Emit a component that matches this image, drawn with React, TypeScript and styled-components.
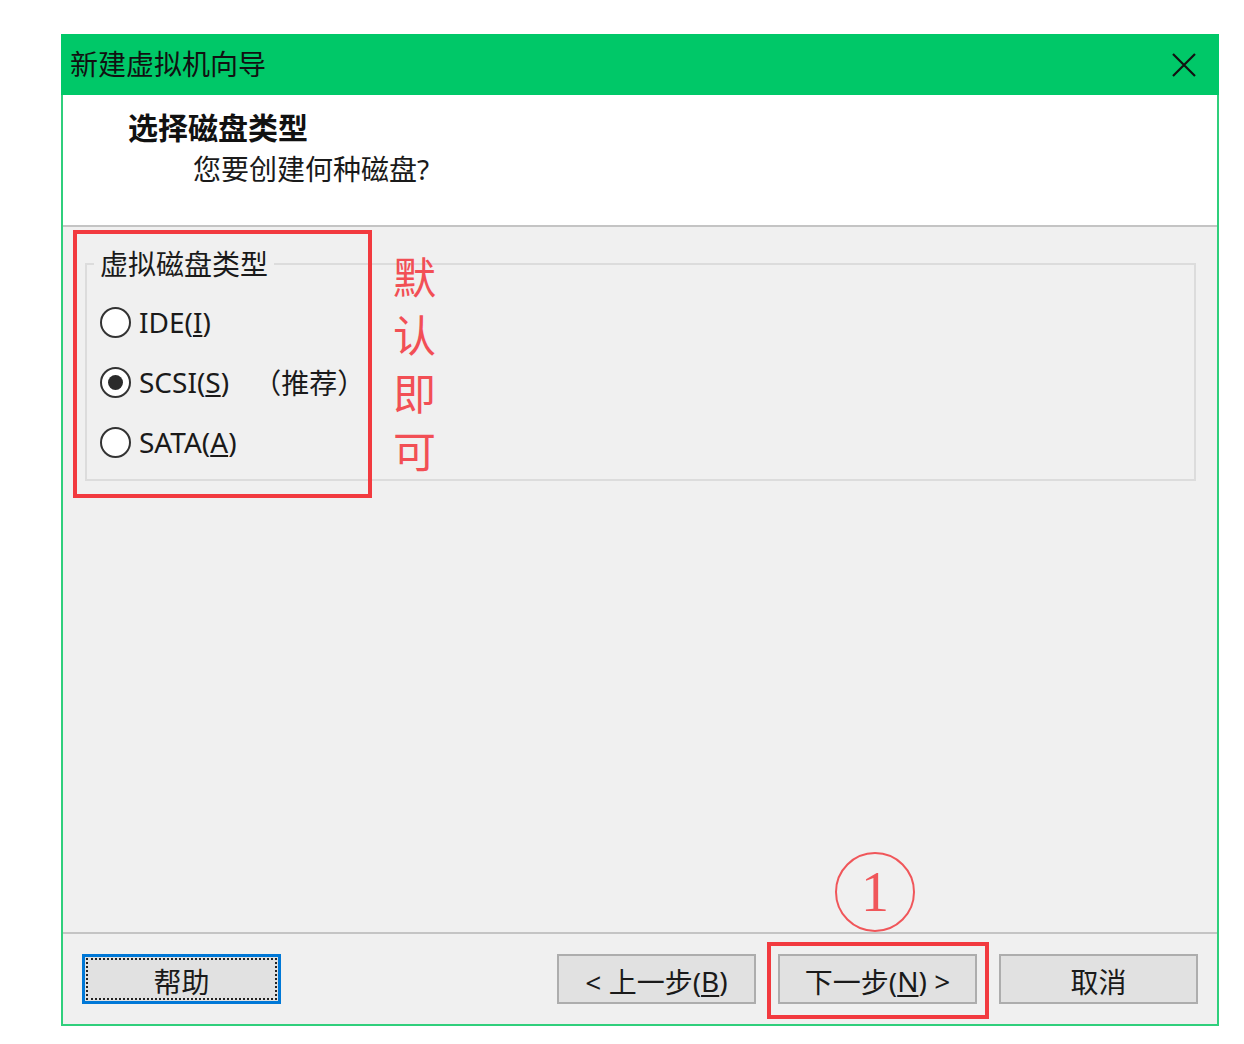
import styled, { createGlobalStyle } from 'styled-components';

const GlobalStyle = createGlobalStyle`
  body {
    margin: 0;
    background: #ffffff;
    font-family: "Noto Sans", "Noto Sans CJK SC", sans-serif;
  }
`;

const CJK = `"Noto Sans", "Noto Sans CJK SC", sans-serif`;

const Page = styled.div`
  padding: 34px 0 0 61px;
`;

const Window = styled.div`
  position: relative;
  width: 1158px;
  box-sizing: border-box;
  border: 2px solid #2fcf7c;
  border-top: none;
  display: flex;
  flex-direction: column;
  background: #f0f0f0;
`;

const TitleBar = styled.div`
  height: 61px;
  margin: 0 -2px;
  background: #00c868;
  display: flex;
  align-items: center;
  justify-content: space-between;
  padding: 0 22px 0 9px;
  font-family: ${CJK};
  font-size: 28px;
  color: #111;
  span {
    margin-top: -3px;
  }
`;

const CloseBtn = styled.svg`
  width: 26px;
  height: 26px;
`;

const Header = styled.div`
  height: 130px;
  background: #ffffff;
  border-bottom: 2px solid #c4c4c4;
  box-sizing: content-box;
  padding-left: 65px;
  display: flex;
  flex-direction: column;
`;

const HeaderTitle = styled.div`
  margin-top: 15px;
  font-family: ${CJK};
  font-weight: 700;
  font-size: 30px;
  line-height: 36px;
  color: #111;
`;

const HeaderSub = styled.div`
  margin-top: 5px;
  padding-left: 65px;
  font-family: ${CJK};
  font-size: 28px;
  line-height: 36px;
  color: #1a1a1a;
`;

const Body = styled.div`
  height: 707px;
  padding: 22px 21px 0 22px;
  box-sizing: border-box;
  border-bottom: 2px solid #c4c4c4;
`;

const Group = styled.fieldset`
  margin: 0;
  height: 232px;
  box-sizing: border-box;
  border: 2px solid #dcdcdc;
  padding: 28px 0 0 13px;
  display: flex;
  flex-direction: column;
  gap: 30px;
`;

const Legend = styled.legend`
  margin-left: -6px;
  padding: 0 6px 0 6px;
  font-family: ${CJK};
  font-size: 28px;
  line-height: 30px;
  color: #1a1a1a;
`;

const Option = styled.label`
  display: flex;
  align-items: center;
  gap: 8px;
  height: 30px;
  font-family: ${CJK};
  font-size: 28px;
  color: #1a1a1a;
`;

const Radio = styled.span<{ checked?: boolean }>`
  width: 31px;
  height: 31px;
  box-sizing: border-box;
  border-radius: 50%;
  border: 2px solid #333;
  background: #fff;
  display: flex;
  align-items: center;
  justify-content: center;
  &::after {
    content: '';
    width: 15px;
    height: 15px;
    border-radius: 50%;
    background: ${p => (p.checked ? '#2a2a2a' : 'transparent')};
  }
`;

const Recommend = styled.span`
  margin-left: 16px;
`;

const Footer = styled.div`
  height: 90px;
  padding: 20px 19px 0 19px;
  box-sizing: border-box;
  display: flex;
  gap: 22px;
`;

const Button = styled.button<{ focused?: boolean }>`
  width: 199px;
  height: 50px;
  box-sizing: border-box;
  background: #e1e1e1;
  border: ${p => (p.focused ? '3px solid #0078d7' : '2px solid #adadad')};
  outline: ${p => (p.focused ? '2px dotted #222' : 'none')};
  outline-offset: -6px;
  font-family: ${CJK};
  font-size: 28px;
  color: #1a1a1a;
  padding: 3px 0 0;
  display: flex;
  align-items: center;
  justify-content: center;
  &:first-child {
    margin-right: auto;
  }
  u {
    text-decoration-thickness: 2px;
    text-underline-offset: 3px;
  }
`;

const RedBox = styled.div<{ left: number; top: number; w: number; h: number }>`
  position: absolute;
  left: ${p => p.left}px;
  top: ${p => p.top}px;
  width: ${p => p.w}px;
  height: ${p => p.h}px;
  box-sizing: border-box;
  border: 4px solid #f23a3f;
  pointer-events: none;
`;

const Note = styled.div`
  position: absolute;
  left: 330px;
  top: 212px;
  width: 46px;
  font-family: "Noto Sans CJK SC", sans-serif;
  font-size: 43px;
  line-height: 58px;
  color: #f24f55;
  display: flex;
  flex-direction: column;
`;

const StepMark = styled.div`
  position: absolute;
  left: 772px;
  top: 818px;
  width: 80px;
  height: 80px;
  box-sizing: border-box;
  border: 2px solid #f0565a;
  border-radius: 50%;
  display: flex;
  align-items: center;
  justify-content: center;
  font-family: "Liberation Serif", serif;
  font-size: 56px;
  color: #f0565a;
`;

export default function App() {
  return (
    <>
      <GlobalStyle />
      <Page>
        <Window>
          <TitleBar>
            <span>新建虚拟机向导</span>
            <CloseBtn viewBox="0 0 26 26">
              <path d="M2 2 L24 24 M24 2 L2 24" stroke="#111" strokeWidth="2.2" fill="none" />
            </CloseBtn>
          </TitleBar>
          <Header>
            <HeaderTitle>选择磁盘类型</HeaderTitle>
            <HeaderSub>您要创建何种磁盘?</HeaderSub>
          </Header>
          <Body>
            <Group>
              <Legend>虚拟磁盘类型</Legend>
              <Option>
                <Radio />
                <span>IDE(<u>I</u>)</span>
              </Option>
              <Option>
                <Radio checked />
                <span>SCSI(<u>S</u>)</span>
                <Recommend>（推荐）</Recommend>
              </Option>
              <Option>
                <Radio />
                <span>SATA(<u>A</u>)</span>
              </Option>
            </Group>
          </Body>
          <Footer>
            <Button focused>帮助</Button>
            <Button>&lt; 上一步(<u>B</u>)</Button>
            <Button>下一步(<u>N</u>) &gt;</Button>
            <Button>取消</Button>
          </Footer>
          <RedBox left={10} top={196} w={299} h={268} />
          <Note>
            <span>默</span>
            <span>认</span>
            <span>即</span>
            <span>可</span>
          </Note>
          <StepMark>1</StepMark>
          <RedBox left={704} top={908} w={222} h={77} />
        </Window>
      </Page>
    </>
  );
}
